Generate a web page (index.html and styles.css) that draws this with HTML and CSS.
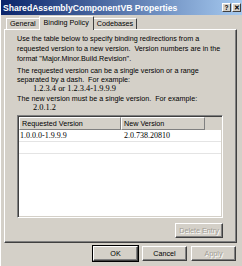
FILE: index.html
```html
<!DOCTYPE html>
<html lang="en">
<head>
  <meta charset="UTF-8">
  <title>SharedAssemblyComponentVB Properties</title>
  <link rel="stylesheet" href="styles.css">
</head>
<body>

  <div class="window">
    <div class="titlebar">
      <span class="title">SharedAssemblyComponentVB Properties</span>
      <div class="caption-buttons">
        <span class="cbtn">?</span>
        <span class="cbtn">&#x2715;</span>
      </div>
    </div>

    <div class="tabs">
      <div class="tab">General</div>
      <div class="tab active">Binding Policy</div>
      <div class="tab">Codebases</div>
    </div>

    <div class="panel">
      <p class="para first">Use the table below to specify binding redirections from a<br>requested version to a new version.&nbsp; Version numbers are in the<br>format "Major.Minor.Build.Revision".</p>
      <p class="para gap">The requested version can be a single version or a range<br>separated by a dash.&nbsp; For example:</p>
      <p class="sample">1.2.3.4 or 1.2.3.4-1.9.9.9</p>
      <p class="para">The new version must be a single version.&nbsp; For example:</p>
      <p class="sample">2.0.1.2</p>

      <div class="listbox">
        <div class="lv-header">
          <div class="hcol c1">Requested Version</div>
          <div class="hcol c2">New Version</div>
        </div>
        <div class="lv-row">
          <div class="cell c1">1.0.0.0-1.9.9.9</div>
          <div class="cell c2">2.0.738.20810</div>
        </div>
        <div class="lv-row"></div>
      </div>

      <div class="panel-actions">
        <button class="btn" disabled>Delete Entry</button>
      </div>
    </div>

    <div class="footer">
      <button class="btn default">OK</button>
      <button class="btn">Cancel</button>
      <button class="btn" disabled>Apply</button>
    </div>
  </div>

</body>
</html>
```

FILE: styles.css
```css
body {
  margin: 0;
  font-family: "Liberation Sans", Arial, sans-serif;
  font-size: 7.2px;
  color: #000;
  background: #d4d0c8;
}

.window {
  width: 242px;
  height: 266px;
  background: #d4d0c8;
  display: flex;
  flex-direction: column;
  box-sizing: border-box;
  border-left: 1px solid #fff;
  overflow: hidden;
}

/* title bar */
.titlebar {
  height: 15px;
  background: linear-gradient(90deg, #0a246a, #a6caf0);
  display: flex;
  align-items: center;
  justify-content: space-between;
  padding: 0 1px 0 2px;
  flex-shrink: 0;
}

.title {
  color: #fff;
  font-weight: bold;
  font-size: 8.6px;
}

.caption-buttons {
  display: flex;
  gap: 1px;
}

.cbtn {
  width: 9px;
  height: 9px;
  box-sizing: border-box;
  background: #d4d0c8;
  border: 1px solid;
  border-color: #fff #404040 #404040 #fff;
  font-size: 6.5px;
  font-weight: bold;
  line-height: 7px;
  text-align: center;
}

/* tabs */
.tabs {
  display: flex;
  align-items: flex-end;
  height: 12px;
  margin-top: 2px;
  padding-left: 5px;
  flex-shrink: 0;
}

.tab {
  height: 11px;
  line-height: 10px;
  padding: 0 3px;
  border: 1px solid;
  border-bottom: none;
  border-color: #fff #404040 transparent #fff;
  border-radius: 1px 1px 0 0;
  box-sizing: border-box;
}

.tab.active {
  height: 14px;
  line-height: 11px;
  padding: 0 4px;
  margin: 0 -1px -1px;
  background: #d4d0c8;
  position: relative;
  z-index: 1;
}

/* tab page */
.panel {
  height: 214px;
  margin: 0 5px 0 3px;
  box-sizing: border-box;
  border: 1px solid;
  border-color: #fff #404040 #404040 #fff;
  box-shadow: inset -1px -1px 0 #808080;
  padding: 4px 13px 0 12px;
  display: flex;
  flex-direction: column;
  flex-shrink: 0;
}

.para,
.sample {
  margin: 0;
  line-height: 9px;
  white-space: nowrap;
}

.para.first {
  line-height: 10px;
}

.para.gap {
  margin-top: 2px;
}

.sample {
  line-height: 10px;
  padding-left: 16px;
  font-family: "Liberation Serif", serif;
  font-size: 8.4px;
}

/* list view */
.listbox {
  margin-top: 2px;
  height: 103px;
  background: #fff;
  box-sizing: border-box;
  border: 1px solid;
  border-color: #808080 #fff #fff #808080;
  box-shadow: inset 1px 1px 0 #404040, inset -1px -1px 0 #d4d0c8;
  padding: 1px;
  display: flex;
  flex-direction: column;
}

.lv-header {
  display: flex;
  height: 13px;
  background: #d4d0c8;
  flex-shrink: 0;
}

.hcol {
  box-sizing: border-box;
  border: 1px solid;
  border-color: #fff #808080 #808080 #fff;
  line-height: 11px;
  padding-left: 2px;
}

.c1 {
  width: 102px;
}

.c2 {
  width: 84px;
}

.lv-row {
  display: flex;
  height: 11px;
  border-bottom: 1px solid #e4e4e4;
  flex-shrink: 0;
}

.cell {
  line-height: 11px;
  padding-left: 1px;
  font-family: "Liberation Serif", serif;
  font-size: 8px;
  box-sizing: border-box;
}

.cell.c2 {
  padding-left: 3px;
}

.panel-actions {
  display: flex;
  justify-content: flex-end;
  margin-top: 5px;
}

/* buttons */
.btn {
  font-family: "Liberation Sans", Arial, sans-serif;
  font-size: 7.2px;
  color: #000;
  background: #d4d0c8;
  height: 15px;
  width: 45px;
  padding: 0;
  margin: 0;
  box-sizing: border-box;
  border: 1px solid;
  border-color: #fff #404040 #404040 #fff;
  box-shadow: inset -1px -1px 0 #808080;
  border-radius: 0;
}

.btn:disabled {
  color: #a09c94;
  text-shadow: 1px 1px 0 #fff;
}

.panel-actions .btn {
  width: 48px;
}

.btn.default {
  outline: 1px solid #000;
  outline-offset: 0;
}

.footer {
  display: flex;
  justify-content: flex-end;
  gap: 4px;
  padding: 3px 6px 0 0;
}
```
